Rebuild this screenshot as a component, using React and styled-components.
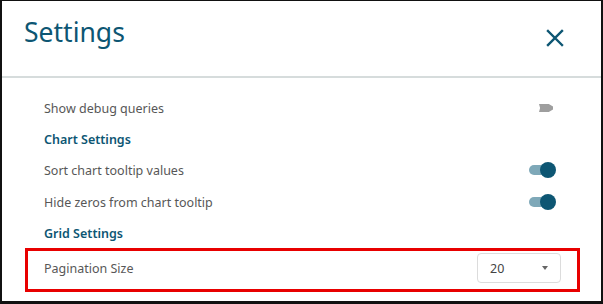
import React from "react";
import styled, { createGlobalStyle } from "styled-components";

const Global = createGlobalStyle`
  html, body { margin: 0; padding: 0; background: #fff; }
  body { font-family: "Noto Sans", "Open Sans", sans-serif; }
`;

const Frame = styled.div`
  box-sizing: border-box;
  width: 603px;
  height: 304px;
  border-style: solid;
  border-color: #111;
  border-width: 1px 2px 3px 2px;
  background: #fff;
  display: flex;
  flex-direction: column;
  overflow: hidden;
`;

const Header = styled.header`
  height: 75px;
  display: flex;
  align-items: center;
  justify-content: space-between;
  padding: 0 34px 0 22px;
  border-bottom: 2px solid #d6dcdc;
`;

const Title = styled.h1`
  margin: 0 0 14px;
  font-size: 26.5px;
  font-weight: 400;
  color: #0d5673;
`;

const Close = styled.button`
  border: 0;
  background: none;
  padding: 0;
  width: 22px;
  height: 22px;
  display: flex;
  align-items: center;
  justify-content: center;
  margin-top: -2px;
  margin-right: 1px;
`;

const Body = styled.div`
  display: flex;
  flex-direction: column;
  padding: 14px 45px 0 42px;
`;

const Row = styled.div`
  height: 32px;
  display: flex;
  align-items: center;
  justify-content: space-between;
  font-size: 12.5px;
  color: #575757;
`;

const Heading = styled.div`
  height: 30px;
  display: flex;
  align-items: center;
  font-size: 12.5px;
  font-weight: 600;
  color: #0d5673;
`;

const Switch = styled.span`
  position: relative;
  width: 28px;
  height: 16px;
  display: inline-flex;
  align-items: center;
  &::before {
    content: "";
    width: 22px;
    height: 10px;
    margin-left: 1px;
    border-radius: 5px;
    background: ${(p) => (p.$on ? "#7ea8b8" : "#c9c9c9")};
  }
  &::after {
    content: "";
    position: absolute;
    right: 0;
    top: 0;
    width: 16px;
    height: 16px;
    border-radius: 50%;
    background: #0d5673;
  }
`;

const OffSwitch = styled.span`
  width: 14px;
  height: 8px;
  margin-right: 3px;
  background: #9e9e9e;
  clip-path: polygon(0 0, 70% 0, 100% 30%, 100% 70%, 70% 100%, 0 100%, 8% 50%);
`;

const Highlight = styled.div`
  box-sizing: border-box;
  margin: 0 -24px 0 -19px;
  height: 44px;
  border: 3px solid #e80000;
  display: flex;
  align-items: center;
  justify-content: space-between;
  padding: 0 14px 0 16px;
  font-size: 12.5px;
  color: #575757;
`;

const Select = styled.div`
  box-sizing: border-box;
  width: 84px;
  height: 30px;
  border: 1px solid #dcdcdc;
  border-radius: 4px;
  display: flex;
  align-items: center;
  justify-content: space-between;
  padding: 0 12px 0 12px;
  font-size: 12.5px;
  color: #444;
  margin-top: -4px;
  margin-right: 2px;
`;

const Caret = styled.span`
  width: 0;
  height: 0;
  border-left: 3.5px solid transparent;
  border-right: 3.5px solid transparent;
  border-top: 4px solid #666;
`;

const Label = styled.span`
  margin-top: ${(p) => (p.$up ? "-3px" : "0")};
`;

export default function App() {
  return (
    <>
      <Global />
      <Frame>
        <Header>
          <Title>Settings</Title>
          <Close aria-label="close">
            <svg width="18" height="18" viewBox="0 0 18 18">
              <path d="M2 2 L16 16 M16 2 L2 16" stroke="#0d5673" strokeWidth="2.4" strokeLinecap="square" />
            </svg>
          </Close>
        </Header>
        <Body>
          <Row>
            <span>Show debug queries</span>
            <OffSwitch />
          </Row>
          <Heading>Chart Settings</Heading>
          <Row>
            <span>Sort chart tooltip values</span>
            <Switch $on />
          </Row>
          <Row>
            <span>Hide zeros from chart tooltip</span>
            <Switch $on />
          </Row>
          <Heading>Grid Settings</Heading>
          <Highlight>
            <Label $up>Pagination Size</Label>
            <Select>
              <span>20</span>
              <Caret />
            </Select>
          </Highlight>
        </Body>
      </Frame>
    </>
  );
}
